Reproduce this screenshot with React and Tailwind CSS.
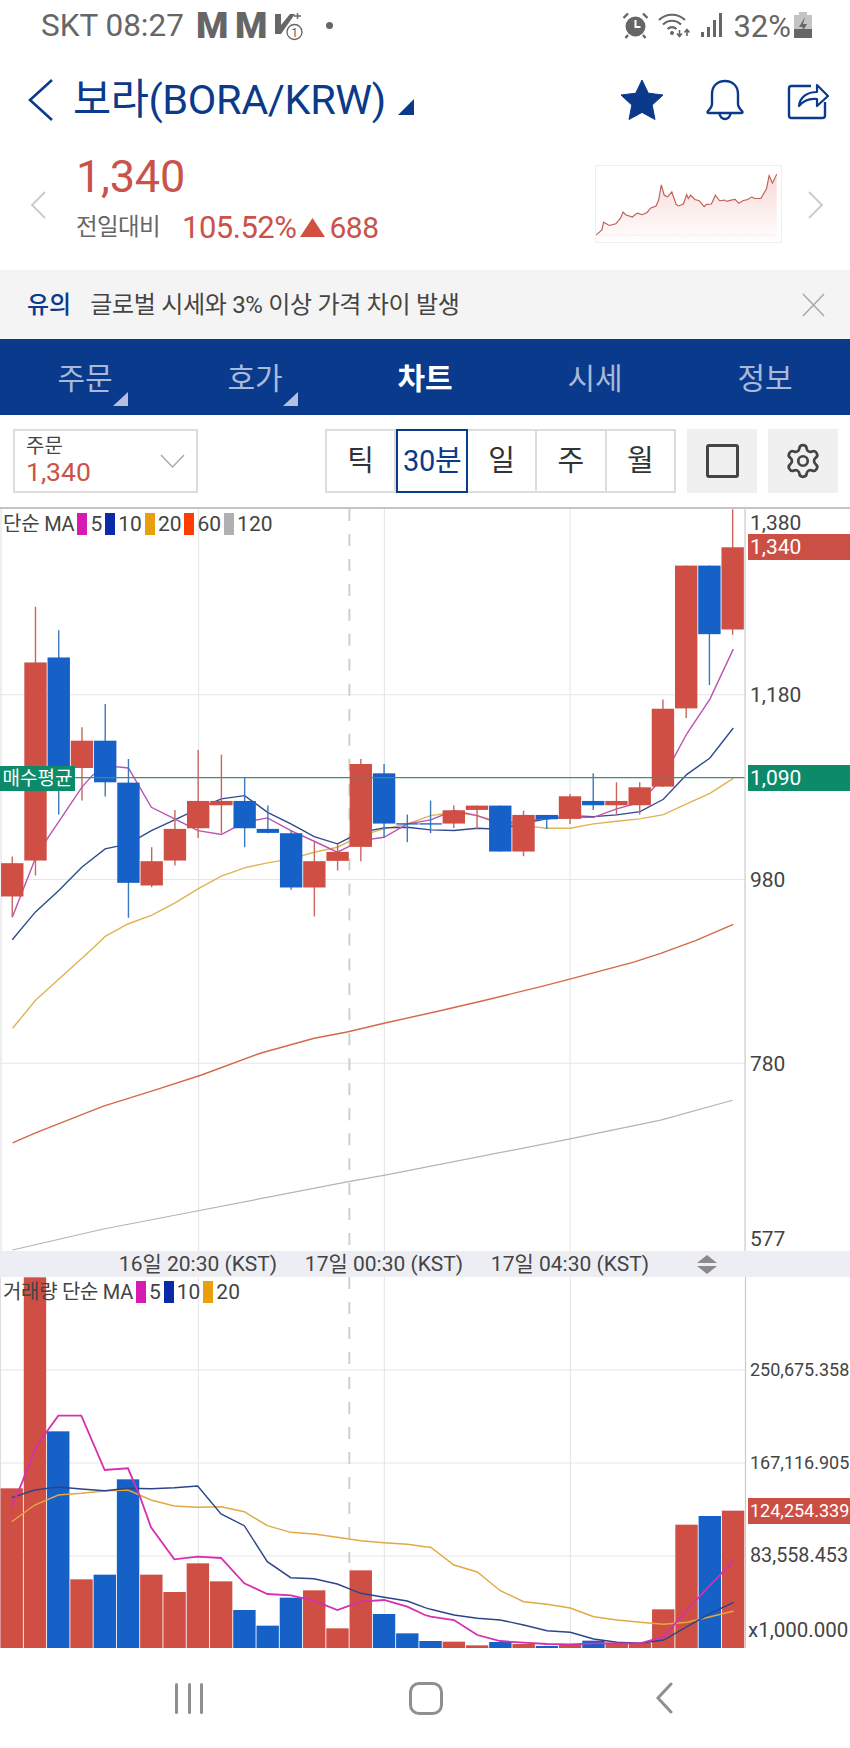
import { Settings } from "lucide-react";

const RED = "#cf4f44";
const BLUE = "#1561c8";
const WICK_RED = "#c8655c";
const WICK_BLUE = "#3b78bd";

const slotX = (i) => 11.7 + 23.27 * i;

// [color, wickTop, wickBottom, bodyTop, bodyBottom] measured on 3x crops, y = 500 + v / 3
const candles = [
  ["r", 1068, 1250, 1088, 1188],
  ["r", 318, 1125, 485, 1080],
  ["b", 388, 942, 470, 830],
  ["r", 680, 900, 720, 802],
  ["b", 610, 888, 720, 845],
  ["b", 775, 1252, 846, 1147],
  ["r", 1040, 1160, 1082, 1155],
  ["r", 928, 1095, 985, 1080],
  ["r", 748, 1012, 901, 983],
  ["r", 762, 998, 901, 914],
  ["b", 830, 1040, 901, 983],
  ["b", 915, 998, 985, 997],
  ["b", 990, 1168, 998, 1161],
  ["r", 1025, 1248, 1082, 1161],
  ["r", 1030, 1110, 1054, 1081],
  ["r", 775, 1082, 790, 1039],
  ["b", 790, 1010, 818, 969],
  ["b", 942, 1025, 968, 972],
  ["b", 900, 998, 968, 972],
  ["r", 915, 982, 929, 969],
  ["r", 915, 985, 915, 928],
  ["b", 915, 1053, 915, 1053],
  ["r", 930, 1067, 943, 1053],
  ["b", 943, 985, 943, 956],
  ["r", 880, 970, 887, 955],
  ["b", 818, 928, 901, 914],
  ["r", 845, 942, 901, 914],
  ["r", 845, 942, 860, 914],
  ["r", 596, 858, 624, 858],
  ["r", 194, 652, 194, 623],
  ["b", 194, 553, 194, 400],
  ["r", 25, 402, 139, 386],
];

const upY = (v) => 500 + v / 3;

const ma5 = [[35,1250],[104,1075],[140,1015],[244,860],[275,825],[314,795],[384,802],[453,920],[523,955],[593,990],[663,1002],[733,965],[802,952],[872,990],[942,1022],[1012,1055],[1082,1020],[1152,1010],[1222,970],[1292,958],[1362,930],[1432,945],[1501,970],[1571,960],[1641,955],[1711,950],[1781,950],[1851,925],[1921,905],[1991,830],[2061,700],[2131,595],[2201,445]];
const ma10 = [[35,1318],[104,1235],[175,1170],[244,1100],[314,1045],[384,1030],[453,990],[523,958],[593,925],[663,895],[733,885],[802,935],[872,970],[942,1008],[1012,1030],[1082,995],[1152,982],[1222,980],[1292,988],[1362,990],[1432,983],[1501,986],[1571,968],[1641,955],[1711,945],[1781,948],[1851,943],[1921,933],[1991,896],[2061,822],[2131,772],[2201,682]];
const ma20 = [[36,1584],[105,1500],[270,1350],[314,1308],[384,1270],[453,1245],[523,1208],[593,1165],[663,1127],[733,1102],[802,1087],[872,1075],[942,1055],[1012,1040],[1082,1005],[1152,985],[1222,970],[1292,945],[1362,935],[1432,945],[1501,965],[1571,975],[1641,983],[1711,983],[1781,970],[1851,962],[1921,955],[1991,942],[2061,910],[2131,878],[2201,833]];
const ma60 = [[12,1142.7],[35,1132.7],[103,1106],[152,1090.7],[200.5,1075],[260,1053],[314,1038],[347,1031.7],[385,1022.7],[439,1010.7],[482,1000.7],[542,986],[569,979],[634,961.7],[661,953],[696.5,940],[733.7,924]];
const ma120 = [[12,1250],[103,1229],[198,1210.7],[347,1181.7],[385,1175],[569,1139],[661,1120],[733,1100]];

const toUp = (pts) => pts.map(([x, y]) => `${(x / 3).toFixed(1)},${upY(y).toFixed(1)}`).join(" ");
const toPx = (pts) => pts.map(([x, y]) => `${x},${y}`).join(" ");

// volume bar tops, y = 1240 + v / 3
const volumes = [
  ["r", 745], ["r", 112], ["b", 574], ["r", 1018], ["b", 1004], ["b", 718], ["r", 1004], ["r", 1056],
  ["r", 970], ["r", 1024], ["b", 1110], ["b", 1157], ["b", 1073], ["r", 1051], ["r", 1165], ["r", 991],
  ["b", 1122], ["b", 1180], ["b", 1203], ["r", 1205], ["r", 1216], ["b", 1206], ["r", 1212], ["b", 1218],
  ["r", 1212], ["b", 1202], ["r", 1208], ["r", 1208], ["r", 1108], ["r", 854], ["b", 828], ["r", 812],
];

const vol5 = [[35,800],[65,730],[104,630],[140,575],[175,527],[244,527],[314,690],[384,685],[420,770],[453,862],[523,958],[593,950],[663,954],[733,1030],[802,1062],[872,1066],[942,1082],[1012,1110],[1082,1085],[1152,1080],[1222,1100],[1275,1125],[1292,1130],[1362,1140],[1432,1185],[1501,1203],[1571,1208],[1641,1212],[1711,1213],[1781,1210],[1851,1210],[1921,1210],[1991,1190],[2061,1110],[2131,1035],[2201,962]];
const vol10 = [[35,773],[104,750],[175,741],[244,747],[314,752],[384,745],[453,746],[523,743],[593,738],[663,822],[733,857],[802,965],[872,1013],[942,1016],[1012,1032],[1082,1060],[1152,1072],[1222,1083],[1275,1103],[1292,1108],[1362,1125],[1432,1135],[1501,1140],[1571,1155],[1641,1172],[1711,1177],[1781,1197],[1851,1207],[1921,1210],[1991,1200],[2061,1160],[2131,1120],[2201,1087]];
const vol20 = [[35,845],[104,795],[175,765],[244,760],[314,753],[384,750],[453,780],[523,798],[593,802],[663,800],[733,815],[802,857],[872,877],[942,882],[1012,892],[1082,902],[1152,908],[1222,913],[1275,920],[1292,922],[1362,975],[1432,996],[1501,1052],[1571,1085],[1641,1093],[1711,1104],[1781,1130],[1851,1140],[1921,1147],[1991,1153],[2061,1147],[2131,1130],[2201,1113]];

const toVol = (pts) => pts.map(([x, y]) => `${(x / 3).toFixed(1)},${(1240 + y / 3).toFixed(1)}`).join(" ");

const spark = "15,228 33,212 38,188 55,198 75,193 90,175 97,157 105,165 125,172 140,160 155,165 170,158 180,145 197,138 205,120 213,73 222,105 232,110 245,95 258,133 265,138 280,132 290,103 295,115 302,105 315,118 328,122 343,140 350,133 365,132 377,105 390,122 405,120 412,124 425,120 437,118 448,130 460,122 475,118 488,110 495,115 515,115 532,85 540,45 550,68 563,40";

const tabs = [
  { label: "주문", corner: true },
  { label: "호가", corner: true },
  { label: "차트", active: true },
  { label: "시세" },
  { label: "정보" },
];

const ranges = ["틱", "30분", "일", "주", "월"];

function Swatch({ className }) {
  return <span className={`w-[10px] h-[22px] ${className}`} />;
}

function GridLines({ rows, bottom, top, dashEnd }) {
  return (
    <g>
      {[198.3, 384.3, 570.3].map((x) => (
        <line key={x} x1={x} x2={x} y1={top} y2={bottom} stroke="#e3e3e3" strokeWidth="1" />
      ))}
      {rows.map((y) => (
        <line key={y} x1="0" x2="745" y1={y} y2={y} stroke="#e6e6e6" strokeWidth="1" />
      ))}
      <line x1="0.5" x2="0.5" y1={top} y2={bottom} stroke="#dedede" strokeWidth="1" />
      <line x1="745.5" x2="745.5" y1={top} y2={bottom} stroke="#c9c9c9" strokeWidth="1.2" />
      <line x1="349.3" x2="349.3" y1={top} y2={dashEnd} stroke="#cfcfcf" strokeWidth="2" strokeDasharray="12 13" />
    </g>
  );
}

function MainChart() {
  return (
    <svg className="absolute inset-0 w-full h-full" viewBox="0 508 850 743">
      <GridLines rows={[694, 879, 1063]} top={508} bottom={1251} dashEnd={1245} />
      <polyline points={toPx(ma120)} fill="none" stroke="#b4b4b4" strokeWidth="1.2" />
      <polyline points={toPx(ma60)} fill="none" stroke="#d4694a" strokeWidth="1.4" />
      <polyline points={toUp(ma20)} fill="none" stroke="#e0b354" strokeWidth="1.4" />
      <polyline points={toUp(ma10)} fill="none" stroke="#2f4a8f" strokeWidth="1.4" />
      <polyline points={toUp(ma5)} fill="none" stroke="#bb52b0" strokeWidth="1.4" />
      {candles.map(([c, wt, wb, bt, bb], i) => {
        const x = slotX(i);
        return (
          <g key={i}>
            <line x1={x} x2={x} y1={upY(wt)} y2={upY(wb)} stroke={c === "r" ? WICK_RED : WICK_BLUE} strokeWidth="1.4" />
            <rect x={x - 11.2} y={upY(bt)} width="22.4" height={(bb - bt) / 3} fill={c === "r" ? RED : BLUE} />
          </g>
        );
      })}
      <line x1="0" x2="745" y1="777" y2="777" stroke="#3d8f7d" strokeWidth="1.2" />
    </svg>
  );
}

function VolumeChart() {
  return (
    <svg className="absolute inset-0 w-full h-full" viewBox="0 1277 850 371">
      <GridLines rows={[1370, 1463, 1556]} top={1277} bottom={1648} dashEnd={1563} />
      {volumes.map(([c, top], i) => {
        const y = 1240 + top / 3;
        return <rect key={i} x={slotX(i) - 11.2} y={y} width="22.4" height={1648 - y} fill={c === "r" ? RED : BLUE} />;
      })}
      <polyline points={toVol(vol20)} fill="none" stroke="#e2a942" strokeWidth="1.4" />
      <polyline points={toVol(vol10)} fill="none" stroke="#2c4489" strokeWidth="1.4" />
      <polyline points={toVol(vol5)} fill="none" stroke="#d62fb0" strokeWidth="1.8" />
    </svg>
  );
}

function AxisLabel({ y, children, className = "" }) {
  return (
    <span
      className={`absolute left-[750px] -translate-y-1/2 leading-none text-[#444] ${className}`}
      style={{ top: y }}
    >
      {children}
    </span>
  );
}

export default function App() {
  return (
    <div className="w-[850px] h-[1748px] bg-white flex flex-col overflow-hidden font-['Roboto','Noto_Sans_CJK_KR',sans-serif]">
      {/* Status bar */}
      <div className="h-[50px] flex items-center pl-[41px] pr-[38px] text-[#666]">
        <span className="text-[31.5px] leading-none w-[155px] mt-[2px]">SKT 08:27</span>
        <span className="text-[37px] leading-none font-black w-[39px]">M</span>
        <span className="text-[37px] leading-none font-black w-[39px]">M</span>
        <svg width="30" height="30" viewBox="0 0 30 30" className="mt-[1px]">
          <path d="M1 3h6v11L16 3h5L7 23H1z" fill="#666" />
          <path d="M20 5h7M23.5 2v6" stroke="#666" strokeWidth="1.4" />
          <circle cx="20.5" cy="21" r="7.5" fill="#fff" stroke="#666" strokeWidth="1.3" />
          <text x="20.5" y="25.5" textAnchor="middle" fontSize="12" fill="#666">1</text>
        </svg>
        <span className="ml-[22px] w-[7px] h-[7px] rounded-full bg-[#666]" />
        <div className="ml-auto flex items-center">
          <svg width="27" height="27" viewBox="0 0 27 27">
            <circle cx="13.5" cy="14.5" r="10" fill="#666" />
            <path d="M13.5 8v7h5" fill="none" stroke="#fff" strokeWidth="2" />
            <path d="M1.5 6L6 1.5M25.5 6L21 1.5M6 23l-2.5 3M21 23l2.5 3" stroke="#666" strokeWidth="2.4" />
          </svg>
          <svg width="34" height="26" viewBox="0 0 34 26" className="ml-[9px]">
            <path d="M1 8C8 1 20 1 27 8M5 12.5c5.5-5 12.5-5 18 0M9.5 17c3-2.5 6-2.500 9 0" fill="none" stroke="#666" strokeWidth="2.2" />
            <circle cx="14" cy="21" r="2" fill="#666" />
            <path d="M21.500 18v6M19 21.500l2.500 3 2.500-3M29 24v-6M26.500 20.500L29 17.500l2.500 3" fill="none" stroke="#666" strokeWidth="1.6" />
          </svg>
          <svg width="22" height="24" viewBox="0 0 22 24" className="ml-[9px]">
            <rect x="0" y="19" width="3" height="5" fill="#666" />
            <rect x="6" y="14" width="3" height="10" fill="#666" />
            <rect x="12" y="7" width="3" height="17" fill="#666" />
            <rect x="18" y="0" width="3" height="24" fill="#666" />
          </svg>
          <span className="text-[31px] leading-none ml-[10px] mt-[2px]">32%</span>
          <svg width="18" height="26" viewBox="0 0 18 26" className="ml-[3px]">
            <rect x="5" y="0" width="8" height="3" fill="#c4c4c4" />
            <rect x="0" y="3" width="18" height="23" fill="#c4c4c4" />
            <rect x="0" y="17" width="18" height="9" fill="#666" />
            <path d="M11 5L5 15h4l-2 7 6-10H9z" fill="#666" />
          </svg>
        </div>
      </div>

      {/* Title row */}
      <div className="h-[100px] flex items-center pl-[27px]">
        <svg width="27" height="42" viewBox="0 0 27 42">
          <path d="M25 1L3 21l22 20" fill="none" stroke="#0b3a8a" strokeWidth="2.6" />
        </svg>
        <span className="ml-[19px] text-[41.5px] leading-none text-[#0b3a8a] tracking-[-0.4px]">보라(BORA/KRW)</span>
        <svg width="16" height="16" viewBox="0 0 16 16" className="ml-[12px] mt-[14px]">
          <path d="M16 0v16H0z" fill="#0b3a8a" />
        </svg>
        <svg width="44" height="42" viewBox="0 0 44 42" className="ml-auto">
          <path d="M22 1l6.300 13.200 14.700 1.800-10.800 10.100 2.800 14.400L22 33.400 9 40.500l2.800-14.400L1 16l14.700-1.800z" fill="#0b3a8a" stroke="#0b3a8a" strokeLinejoin="round" />
        </svg>
        <svg width="38" height="42" viewBox="0 0 38 42" className="ml-[42px]">
          <path d="M6 25V15C6 7 11.500 2 19 2s13 5 13 13v10c0 3 2 5 4 7 1 1 .5 2-1 2H3c-1.500 0-2-1-1-2 2-2 4-4 4-7z" fill="none" stroke="#0b3a8a" strokeWidth="2.4" />
          <path d="M13.500 34.500c.5 3.500 3 5.500 5.500 5.500s5-2 5.500-5.500" fill="none" stroke="#0b3a8a" strokeWidth="2.400" />
        </svg>
        <svg width="42" height="40" viewBox="0 0 42 40" className="ml-[43px] mr-[21px]">
          <path d="M24 6H4.500C3 6 2 7 2 8.500v27C2 37 3 38 4.500 38h31c1.500 0 2.500-1 2.500-2.500V22" fill="none" stroke="#0b3a8a" strokeWidth="2.4" />
          <path d="M12 26c1-9 8-14 18-14V5l11 11-11 10v-7c-8-1-14 2-18 7z" fill="#fff" stroke="#0b3a8a" strokeWidth="2.2" strokeLinejoin="round" />
        </svg>
      </div>

      {/* Price row */}
      <div className="h-[120px] flex items-start">
        <svg width="16" height="28" viewBox="0 0 16 28" className="ml-[30px] mt-[41px]">
          <path d="M15 1L2 14l13 13" fill="none" stroke="#c9c9c9" strokeWidth="1.8" />
        </svg>
        <div className="ml-[30px] flex flex-col">
          <span className="text-[45px] leading-none mt-[4px] text-[#c9524a] tracking-[-0.2px]">1,340</span>
          <div className="flex items-center mt-[13px]">
            <span className="text-[23.5px] leading-none text-[#666] w-[106px] tracking-[-0.6px]">전일대비</span>
            <span className="text-[31px] leading-none text-[#c9524a] tracking-[-0.5px]">105.52%</span>
            <svg width="25" height="19" viewBox="0 0 25 19" className="ml-[3px]">
              <path d="M12.500 0L25 19H0z" fill="#d2503f" />
            </svg>
            <span className="text-[30px] leading-none text-[#c9524a] ml-[5px] tracking-[-0.5px]">688</span>
          </div>
        </div>
        <div className="ml-auto mt-[15px] w-[187px] h-[78px] border border-[#eeeeee]">
          <svg className="w-full h-full" viewBox="15 15 561 234" preserveAspectRatio="none">
            <defs>
              <linearGradient id="sparkFill" x1="0" x2="0" y1="0" y2="1">
                <stop offset="0" stopColor="#e58b80" stopOpacity="0.32" />
                <stop offset="1" stopColor="#e58b80" stopOpacity="0.01" />
              </linearGradient>
            </defs>
            <polygon points={`15,247 ${spark} 563,247`} fill="url(#sparkFill)" />
            <polyline points={spark} fill="none" stroke="#bd6058" strokeWidth="3.5" />
            <line x1="15" x2="563" y1="228" y2="228" stroke="#e8dcdc" strokeWidth="2" strokeDasharray="4 6" />
          </svg>
        </div>
        <svg width="16" height="28" viewBox="0 0 16 28" className="ml-[26px] mr-[26px] mt-[41px]">
          <path d="M1 1l13 13L1 27" fill="none" stroke="#c9c9c9" strokeWidth="1.8" />
        </svg>
      </div>

      {/* Notice */}
      <div className="h-[69px] bg-[#f4f4f5] flex items-center pl-[27px]">
        <span className="text-[24px] leading-none font-medium text-[#0b3a8a]">유의</span>
        <span className="ml-[19px] text-[24px] leading-none text-[#444] tracking-[-0.3px]">글로벌 시세와 3% 이상 가격 차이 발생</span>
        <svg width="23" height="24" viewBox="0 0 23 24" className="ml-auto mr-[25px]">
          <path d="M1 1l21 22M22 1L1 23" fill="none" stroke="#a8a8a8" strokeWidth="1.5" />
        </svg>
      </div>

      {/* Tabs */}
      <div className="h-[76px] bg-[#0a3a8c] grid grid-cols-5">
        {tabs.map((t) => (
          <div key={t.label} className="relative flex items-center justify-center pt-[3px]">
            <span className={`text-[30px] leading-none ${t.active ? "font-bold text-white" : "text-[#a9b9d9]"}`}>{t.label}</span>
            {t.corner && (
              <svg width="15" height="14" viewBox="0 0 15 14" className="absolute left-[113px] top-[53px]">
                <path d="M15 0v14H0z" fill="#b3c1de" />
              </svg>
            )}
          </div>
        ))}
      </div>

      {/* Toolbar */}
      <div className="h-[92px] flex items-center pl-[13px] pr-[12px]">
        <div className="w-[185px] h-[64px] border-2 border-[#dddddd] flex items-center pl-[11px] pr-[11px]">
          <div className="flex flex-col">
            <span className="text-[20px] leading-none text-[#444]">주문</span>
            <span className="text-[26.5px] leading-none text-[#c9524a] mt-[3px]">1,340</span>
          </div>
          <svg width="25" height="14" viewBox="0 0 25 14" className="ml-auto">
            <path d="M1 1l11.500 12L24 1" fill="none" stroke="#a8a8a8" strokeWidth="1.4" />
          </svg>
        </div>
        <div className="ml-[127px] flex h-[64px] w-[351px] border-2 border-[#dddddd]">
          {ranges.map((r) => (
            <div
              key={r}
              className={`flex-1 flex items-center justify-center text-[29px] leading-none ${
                r === "30분"
                  ? "border-2 border-[#0b3a8a] text-[#0b3a8a] -my-[2px] tracking-[-0.3px]"
                  : "border-r-2 border-[#dddddd] last:border-r-0 text-[#333]"
              }`}
            >
              {r}
            </div>
          ))}
        </div>
        <div className="ml-[11px] w-[70px] h-[64px] bg-[#f0f0f0] flex items-center justify-center">
          <span className="w-[33px] h-[34px] border-[3px] border-[#444] rounded-[3px]" />
        </div>
        <div className="ml-[11px] w-[70px] h-[64px] bg-[#f0f0f0] flex items-center justify-center">
          <Settings size={38} strokeWidth={1.7} color="#444" />
        </div>
      </div>

      {/* Price chart */}
      <div className="relative h-[744px] border-t-2 border-[#c4c4c4] text-[21px]">
        <MainChart />
        <div className="absolute left-[3px] top-[4px] flex items-center gap-[3px] text-[21px] leading-none text-[#444]">
          <span className="text-[20px] tracking-[-0.2px]">단순 MA</span>
          <Swatch className="bg-[#d51bb4]" />
          <span>5</span>
          <Swatch className="bg-[#0b2aa8]" />
          <span>10</span>
          <Swatch className="bg-[#e8a010]" />
          <span>20</span>
          <Swatch className="bg-[#ff3d00]" />
          <span>60</span>
          <Swatch className="bg-[#b0b0b0]" />
          <span>120</span>
        </div>
        <div className="absolute left-0 top-[257px] w-[75px] h-[25px] bg-[#0d8a6a] flex items-center justify-center text-[19px] leading-none text-white">
          매수평균
        </div>
        <AxisLabel y={14}>1,380</AxisLabel>
        <div className="absolute left-[748px] top-[25px] w-[102px] h-[26px] bg-[#cb4f44] pl-[2px] flex items-center leading-none text-white">1,340</div>
        <AxisLabel y={186}>1,180</AxisLabel>
        <div className="absolute left-[748px] top-[256px] w-[102px] h-[26px] bg-[#0d8a6a] pl-[2px] flex items-center leading-none text-white">1,090</div>
        <AxisLabel y={371}>980</AxisLabel>
        <AxisLabel y={555}>780</AxisLabel>
        <AxisLabel y={730}>577</AxisLabel>
      </div>

      {/* Time axis */}
      <div className="h-[26px] bg-[#eceef3] flex items-center pl-[105px] text-[21px] leading-none text-[#444]">
        <span className="w-[186px] text-center whitespace-nowrap">16일 20:30 (KST)</span>
        <span className="w-[186px] text-center whitespace-nowrap">17일 00:30 (KST)</span>
        <span className="w-[186px] text-center whitespace-nowrap">17일 04:30 (KST)</span>
        <svg width="22" height="19" viewBox="0 0 22 19" className="ml-[33px]">
          <path d="M11 0l10 8H1z" fill="#8a8a8a" />
          <path d="M11 19l10-8H1z" fill="#8a8a8a" />
        </svg>
      </div>

      {/* Volume chart */}
      <div className="relative h-[371px] text-[18px]">
        <VolumeChart />
        <div className="absolute left-[3px] top-[4px] flex items-center gap-[3px] text-[21px] leading-none text-[#444]">
          <span className="text-[20px] tracking-[-0.3px]">거래량 단순 MA</span>
          <Swatch className="bg-[#d51bb4]" />
          <span>5</span>
          <Swatch className="bg-[#0b2aa8]" />
          <span>10</span>
          <Swatch className="bg-[#e8a010]" />
          <span>20</span>
        </div>
        <AxisLabel y={93}>250,675.358</AxisLabel>
        <AxisLabel y={186}>167,116.905</AxisLabel>
        <div className="absolute left-[748px] top-[221px] w-[102px] h-[26px] bg-[#cb4f44] pl-[2px] flex items-center leading-none text-white">124,254.339</div>
        <AxisLabel y={279} className="text-[19.8px]">83,558.453</AxisLabel>
        <span className="absolute left-[748px] top-[353px] -translate-y-1/2 leading-none text-[#444] text-[20.5px]">x1,000.000</span>
      </div>

      {/* Android nav */}
      <div className="flex-1 relative flex items-center">
        <div className="ml-[175px] flex gap-[9.500px]">
          <span className="w-[3px] h-[31px] rounded-full bg-[#8f8f8f]" />
          <span className="w-[3px] h-[31px] rounded-full bg-[#8f8f8f]" />
          <span className="w-[3px] h-[31px] rounded-full bg-[#8f8f8f]" />
        </div>
        <span className="ml-[206px] w-[34px] h-[33px] border-[3px] border-[#8f8f8f] rounded-[10px]" />
        <svg width="18" height="32" viewBox="0 0 18 32" className="ml-[212px]">
          <path d="M16 2L3 16l13 14" fill="none" stroke="#8f8f8f" strokeWidth="3" strokeLinecap="round" />
        </svg>
      </div>
    </div>
  );
}
